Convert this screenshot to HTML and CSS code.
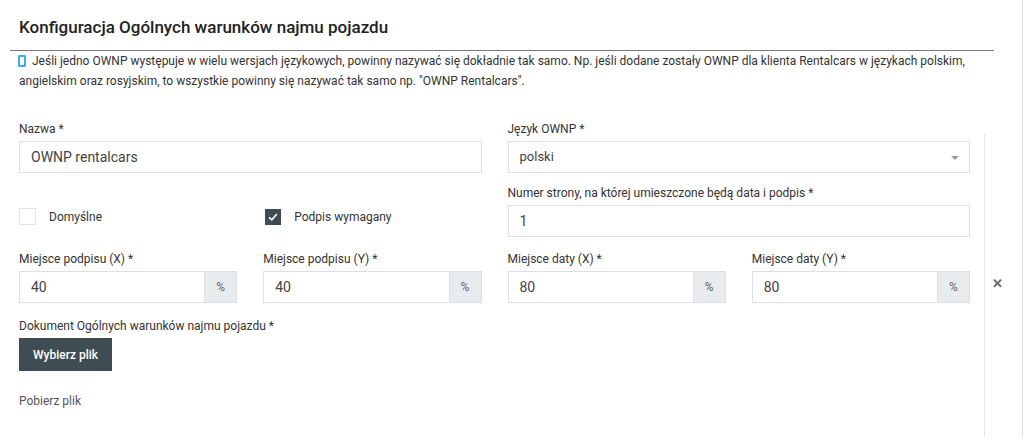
FILE: index.html
```html
<!DOCTYPE html>
<html lang="pl">
<head>
<meta charset="utf-8">
<title>Konfiguracja OWNP</title>
<link rel="stylesheet" href="styles.css">
</head>
<body>
<div class="page">
  <div class="panel">
    <h1 class="title">Konfiguracja Ogólnych warunków najmu pojazdu</h1>
    <div class="info"><span class="info-icon"></span>Jeśli jedno OWNP występuje w wielu wersjach językowych, powinny nazywać się dokładnie tak samo. Np. jeśli dodane zostały OWNP dla klienta Rentalcars w językach polskim, angielskim oraz rosyjskim, to wszystkie powinny się nazywać tak samo np. "OWNP Rentalcars".</div>
    <div class="body">
      <div class="form">
        <div class="grid">
          <div class="field span2">
            <label class="label">Nazwa *</label>
            <div class="input">OWNP rentalcars</div>
          </div>
          <div class="field span2">
            <label class="label">Język OWNP *</label>
            <div class="input select">polski<span class="caret"></span></div>
          </div>
          <div class="checks span2">
            <div class="check"><span class="box"></span>Domyślne</div>
            <div class="check"><span class="box checked"><svg viewBox="0 0 16 16" width="16" height="16"><path d="M3.6 8.4 L6.6 11.3 L12.4 4.6" fill="none" stroke="#fff" stroke-width="1.8"/></svg></span>Podpis wymagany</div>
          </div>
          <div class="field span2">
            <label class="label">Numer strony, na której umieszczone będą data i podpis *</label>
            <div class="input">1</div>
          </div>
        </div>
        <div class="grid row3">
          <div class="field">
            <label class="label">Miejsce podpisu (X) *</label>
            <div class="group"><div class="input grow">40</div><span class="addon">%</span></div>
          </div>
          <div class="field">
            <label class="label">Miejsce podpisu (Y) *</label>
            <div class="group"><div class="input grow">40</div><span class="addon">%</span></div>
          </div>
          <div class="field">
            <label class="label">Miejsce daty (X) *</label>
            <div class="group"><div class="input grow">80</div><span class="addon">%</span></div>
          </div>
          <div class="field">
            <label class="label">Miejsce daty (Y) *</label>
            <div class="group"><div class="input grow">80</div><span class="addon">%</span></div>
          </div>
        </div>
        <div class="doc">
          <label class="label">Dokument Ogólnych warunków najmu pojazdu *</label>
          <button class="btn" type="button">Wybierz plik</button>
          <a class="link">Pobierz plik</a>
        </div>
      </div>
      <div class="side">
        <span class="close">✕</span>
      </div>
    </div>
  </div>
</div>
</body>
</html>
```

FILE: styles.css
```css
* { box-sizing: border-box; }
html, body { margin: 0; padding: 0; }
body {
  background: #fff;
  font-family: Roboto, "Liberation Sans", Arial, sans-serif;
  color: #333;
  font-size: 12px;
}
.page {
  width: 1023px;
  height: 437px;
  border-right: 1px solid #e3e5e8;
  overflow: hidden;
}
.panel {
  margin-left: 10px;
  width: 984px;
}
.title {
  margin: 0;
  padding: 16px 0 12px 9px;
  font-size: 17px;
  line-height: 22px;
  font-weight: 500;
  color: #222;
  border-bottom: 1px solid #777;
}
.info {
  padding-left: 9px;
  line-height: 20px;
  font-size: 12px;
  color: #333;
}
.info-icon {
  display: inline-block;
  width: 8px;
  height: 12px;
  border: 2px solid #3aaee8;
  border-radius: 1px;
  margin-left: -1px;
  margin-right: 6px;
  vertical-align: -2px;
}
.body {
  display: flex;
  padding-left: 9px;
  margin-top: 30px;
}
.form {
  width: 951px;
  flex-shrink: 0;
}
.grid {
  display: grid;
  grid-template-columns: repeat(4, 1fr);
  column-gap: 26px;
  row-gap: 12px;
}
.row3 { margin-top: 14px; }
.span2 { grid-column: span 2; }
.label {
  display: block;
  line-height: 16px;
  margin-bottom: 4px;
  font-size: 12px;
  color: #333;
}
.input {
  height: 32px;
  border: 1px solid #dcdfe3;
  padding: 0 11px;
  font-size: 14px;
  line-height: 30px;
  color: #444;
  background: #fff;
}
.select {
  position: relative;
  font-size: 13px;
}
.caret {
  position: absolute;
  right: 10px;
  top: 14px;
  width: 0;
  height: 0;
  border-left: 4px solid transparent;
  border-right: 4px solid transparent;
  border-top: 4px solid #999;
}
.checks {
  display: grid;
  grid-template-columns: 1fr 1fr;
  column-gap: 26px;
  padding-top: 23px;
}
.check {
  display: flex;
  align-items: center;
  height: 17px;
  font-size: 12px;
  color: #333;
}
.box {
  width: 17px;
  height: 17px;
  border: 1px solid #e2e4e7;
  margin-right: 13px;
  display: inline-flex;
  align-items: center;
  justify-content: center;
}
.box.checked {
  width: 16px;
  height: 16px;
  margin-left: 2px;
  margin-right: 13px;
  background: #3e4b50;
  border-color: #3e4b50;
}
.group {
  display: flex;
}
.grow { flex: 1; }
.addon {
  width: 32px;
  height: 32px;
  background: #e9ecef;
  border: 1px solid #dcdfe3;
  border-left: none;
  display: flex;
  align-items: center;
  justify-content: center;
  color: #666;
  font-size: 12px;
}
.doc {
  margin-top: 15px;
}
.btn {
  display: block;
  height: 33px;
  padding: 0 14px;
  background: #3f4d52;
  color: #fff;
  border: none;
  font-family: inherit;
  font-size: 12px;
  font-weight: 500;
}
.link {
  display: block;
  margin-top: 22px;
  line-height: 16px;
  color: #555;
  font-size: 12px;
}
.side {
  flex-shrink: 0;
  margin-left: 14px;
  margin-top: 12px;
  border-left: 1px solid #e3e5e8;
  width: 26px;
  display: flex;
  justify-content: center;
  padding-top: 143px;
  height: 320px;
}
.close {
  font-size: 13px;
  font-weight: 700;
  color: #666;
  line-height: 16px;
}
```
